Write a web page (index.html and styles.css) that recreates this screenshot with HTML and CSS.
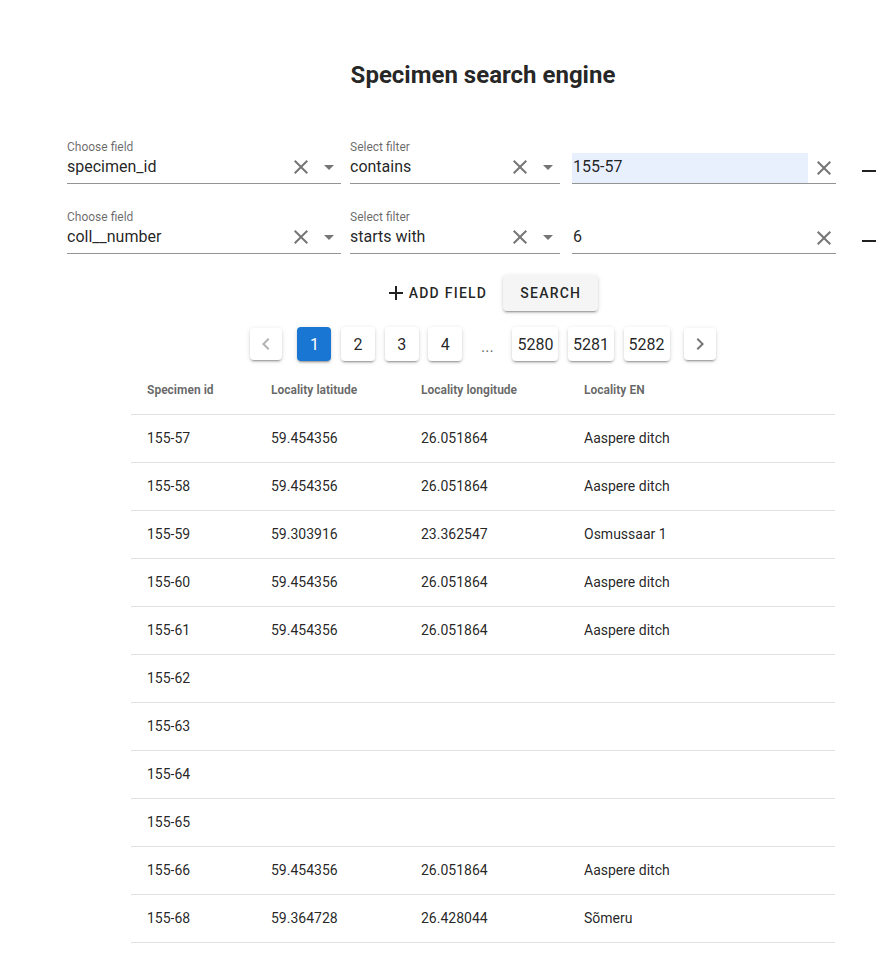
FILE: index.html
```html
<!DOCTYPE html>
<html lang="en">
<head>
<meta charset="utf-8">
<title>Specimen search engine</title>
<link rel="stylesheet" href="styles.css">
</head>
<body>
<div class="page">
  <h1 class="title">Specimen search engine</h1>

  <div class="filters">
    <div class="filter-row">
      <div class="field field-name">
        <div class="field-label">Choose field</div>
        <div class="field-control">
          <span class="field-text">specimen_id</span>
          <svg class="icon" viewBox="0 0 24 24"><path d="M19 6.41L17.59 5 12 10.59 6.41 5 5 6.41 10.59 12 5 17.59 6.41 19 12 13.41 17.59 19 19 17.59 13.41 12z"/></svg>
          <svg class="icon" viewBox="0 0 24 24"><path d="M7 10l5 5 5-5z"/></svg>
        </div>
      </div>
      <div class="field field-op">
        <div class="field-label">Select filter</div>
        <div class="field-control">
          <span class="field-text">contains</span>
          <svg class="icon" viewBox="0 0 24 24"><path d="M19 6.41L17.59 5 12 10.59 6.41 5 5 6.41 10.59 12 5 17.59 6.41 19 12 13.41 17.59 19 19 17.59 13.41 12z"/></svg>
          <svg class="icon" viewBox="0 0 24 24"><path d="M7 10l5 5 5-5z"/></svg>
        </div>
      </div>
      <div class="field field-input-box">
        <div class="field-label"></div>
        <div class="field-control field-control-input">
          <span class="field-input autofilled">155-57</span>
          <svg class="icon" viewBox="0 0 24 24"><path d="M19 6.41L17.59 5 12 10.59 6.41 5 5 6.41 10.59 12 5 17.59 6.41 19 12 13.41 17.59 19 19 17.59 13.41 12z"/></svg>
        </div>
      </div>
      <svg class="remove" viewBox="0 0 24 24"><path d="M19,13H5V11H19V13Z"/></svg>
    </div>

    <div class="filter-row">
      <div class="field field-name">
        <div class="field-label">Choose field</div>
        <div class="field-control">
          <span class="field-text">coll__number</span>
          <svg class="icon" viewBox="0 0 24 24"><path d="M19 6.41L17.59 5 12 10.59 6.41 5 5 6.41 10.59 12 5 17.59 6.41 19 12 13.41 17.59 19 19 17.59 13.41 12z"/></svg>
          <svg class="icon" viewBox="0 0 24 24"><path d="M7 10l5 5 5-5z"/></svg>
        </div>
      </div>
      <div class="field field-op">
        <div class="field-label">Select filter</div>
        <div class="field-control">
          <span class="field-text">starts with</span>
          <svg class="icon" viewBox="0 0 24 24"><path d="M19 6.41L17.59 5 12 10.59 6.41 5 5 6.41 10.59 12 5 17.59 6.41 19 12 13.41 17.59 19 19 17.59 13.41 12z"/></svg>
          <svg class="icon" viewBox="0 0 24 24"><path d="M7 10l5 5 5-5z"/></svg>
        </div>
      </div>
      <div class="field field-input-box">
        <div class="field-label"></div>
        <div class="field-control field-control-input">
          <span class="field-input">6</span>
          <svg class="icon" viewBox="0 0 24 24"><path d="M19 6.41L17.59 5 12 10.59 6.41 5 5 6.41 10.59 12 5 17.59 6.41 19 12 13.41 17.59 19 19 17.59 13.41 12z"/></svg>
        </div>
      </div>
      <svg class="remove" viewBox="0 0 24 24"><path d="M19,13H5V11H19V13Z"/></svg>
    </div>
  </div>

  <div class="actions">
    <button class="btn btn-text">
      <svg class="btn-icon" viewBox="0 0 24 24"><path d="M19,13H13V19H11V13H5V11H11V5H13V11H19V13Z"/></svg>
      <span>Add field</span>
    </button>
    <button class="btn btn-raised">Search</button>
  </div>

  <nav class="pagination">
    <span class="page-nav page-prev disabled"><svg viewBox="0 0 24 24"><path d="M15.41,16.58L10.83,12L15.41,7.41L14,6L8,12L14,18L15.41,16.58Z"/></svg></span>
    <span class="page-item active">1</span>
    <span class="page-item">2</span>
    <span class="page-item">3</span>
    <span class="page-item">4</span>
    <span class="page-more">...</span>
    <span class="page-item">5280</span>
    <span class="page-item">5281</span>
    <span class="page-item">5282</span>
    <span class="page-nav"><svg viewBox="0 0 24 24"><path d="M8.59,16.58L13.17,12L8.59,7.41L10,6L16,12L10,18L8.59,16.58Z"/></svg></span>
  </nav>

  <table class="results">
    <colgroup>
      <col class="col-id">
      <col class="col-lat">
      <col class="col-lon">
      <col class="col-loc">
    </colgroup>
    <thead>
      <tr><th>Specimen id</th><th>Locality latitude</th><th>Locality longitude</th><th>Locality EN</th></tr>
    </thead>
    <tbody>
      <tr><td>155-57</td><td>59.454356</td><td>26.051864</td><td>Aaspere ditch</td></tr>
      <tr><td>155-58</td><td>59.454356</td><td>26.051864</td><td>Aaspere ditch</td></tr>
      <tr><td>155-59</td><td>59.303916</td><td>23.362547</td><td>Osmussaar 1</td></tr>
      <tr><td>155-60</td><td>59.454356</td><td>26.051864</td><td>Aaspere ditch</td></tr>
      <tr><td>155-61</td><td>59.454356</td><td>26.051864</td><td>Aaspere ditch</td></tr>
      <tr><td>155-62</td><td></td><td></td><td></td></tr>
      <tr><td>155-63</td><td></td><td></td><td></td></tr>
      <tr><td>155-64</td><td></td><td></td><td></td></tr>
      <tr><td>155-65</td><td></td><td></td><td></td></tr>
      <tr><td>155-66</td><td>59.454356</td><td>26.051864</td><td>Aaspere ditch</td></tr>
      <tr><td>155-68</td><td>59.364728</td><td>26.428044</td><td>Sõmeru</td></tr>
    </tbody>
  </table>
</div>
</body>
</html>
```

FILE: styles.css
```css
html, body {
  margin: 0;
  padding: 0;
  overflow: hidden;
  background: #fff;
}

body {
  font-family: Roboto, "Noto Sans", sans-serif;
  color: rgba(0, 0, 0, 0.87);
}

.page {
  width: 832px;
  margin-left: 67px;
}

.title {
  margin: 59px 0 0;
  font-size: 24px;
  line-height: 32px;
  font-weight: 700;
  text-align: center;
  color: rgba(0, 0, 0, 0.87);
}

.filters {
  margin-top: 48px;
  display: flex;
  flex-direction: column;
  gap: 25px;
}

.filter-row {
  display: flex;
  align-items: flex-end;
}

.field {
  display: flex;
  flex-direction: column;
}

.field-name {
  width: 274px;
  margin-right: 9px;
}

.field-op {
  width: 210px;
  margin-right: 12px;
}

.field-input-box {
  width: 264px;
  margin-right: 21px;
}

.field-label {
  height: 14px;
  font-size: 12px;
  line-height: 16px;
  color: rgba(0, 0, 0, 0.6);
}

.field-control {
  display: flex;
  align-items: center;
  gap: 4px;
  height: 28px;
  padding-bottom: 2px;
  border-bottom: 1px solid rgba(0, 0, 0, 0.42);
}

.field-control-input {
  height: 30px;
  padding-bottom: 0;
}

.field-text {
  flex: 1;
  font-size: 16px;
  line-height: 20px;
  white-space: nowrap;
}

.field-input {
  flex: 1;
  align-self: stretch;
  display: flex;
  align-items: center;
  padding: 0 0 2px 1px;
  font-size: 16px;
  line-height: 20px;
}

.autofilled {
  background: #e8f0fe;
}

.icon {
  width: 24px;
  height: 24px;
  flex: none;
  fill: rgba(0, 0, 0, 0.54);
}

.remove {
  width: 24px;
  height: 24px;
  flex: none;
  margin-bottom: 1px;
  fill: rgba(0, 0, 0, 0.87);
}

.actions {
  display: flex;
  justify-content: center;
  margin-top: 21px;
}

.btn {
  display: inline-flex;
  align-items: center;
  height: 36px;
  padding: 0 16px;
  border: 0;
  border-radius: 4px;
  font-family: inherit;
  font-size: 14px;
  font-weight: 500;
  letter-spacing: 0.0892857em;
  text-transform: uppercase;
  color: rgba(0, 0, 0, 0.87);
  background: transparent;
}

.btn-icon {
  width: 24px;
  height: 24px;
  fill: rgba(0, 0, 0, 0.87);
  margin-right: 1px;
}

.btn-raised {
  padding: 0 17px;
  background: #f5f5f5;
  box-shadow: 0 3px 1px -2px rgba(0, 0, 0, 0.2), 0 2px 2px 0 rgba(0, 0, 0, 0.14), 0 1px 5px 0 rgba(0, 0, 0, 0.12);
}

.pagination {
  display: flex;
  justify-content: center;
  align-items: center;
  height: 34px;
  margin-top: 16px;
}

.page-item {
  box-sizing: border-box;
  min-width: 34px;
  height: 34px;
  padding: 0 5px;
  margin: 0 4.8px;
  display: flex;
  align-items: center;
  justify-content: center;
  border-radius: 4px;
  background: #fff;
  font-size: 16px;
  color: rgba(0, 0, 0, 0.87);
  box-shadow: 0 3px 1px -2px rgba(0, 0, 0, 0.2), 0 2px 2px 0 rgba(0, 0, 0, 0.14), 0 1px 5px 0 rgba(0, 0, 0, 0.12);
}

.page-item.active {
  background: #1976d2;
  color: #fff;
}

.page-more {
  width: 31px;
  height: 34px;
  margin: 0 4.8px;
  display: flex;
  align-items: flex-end;
  justify-content: center;
  font-size: 16px;
  line-height: 28px;
  color: rgba(0, 0, 0, 0.6);
}

.page-nav {
  width: 32px;
  height: 32px;
  margin: 0 10px;
  display: flex;
  align-items: center;
  justify-content: center;
  border-radius: 4px;
  background: #fff;
  box-shadow: 0 3px 1px -2px rgba(0, 0, 0, 0.2), 0 2px 2px 0 rgba(0, 0, 0, 0.14), 0 1px 5px 0 rgba(0, 0, 0, 0.12);
}

.page-prev {
  margin-right: 11px;
}

.page-nav svg {
  width: 24px;
  height: 24px;
  fill: rgba(0, 0, 0, 0.54);
}

.page-nav.disabled svg {
  fill: rgba(0, 0, 0, 0.3);
}

.results {
  width: 704px;
  margin: 6px auto 0;
  border-collapse: separate;
  border-spacing: 0;
  table-layout: fixed;
}

.col-id { width: 124px; }
.col-lat { width: 150px; }
.col-lon { width: 163px; }
.col-loc { width: 267px; }

.results th,
.results td {
  box-sizing: border-box;
  height: 48px;
  padding: 0 16px 2px;
  text-align: left;
  border-bottom: 1px solid rgba(0, 0, 0, 0.12);
  white-space: nowrap;
}

.results th {
  font-size: 12px;
  font-weight: 700;
  color: rgba(0, 0, 0, 0.6);
}

.results td {
  font-size: 14px;
  color: rgba(0, 0, 0, 0.87);
}
```
